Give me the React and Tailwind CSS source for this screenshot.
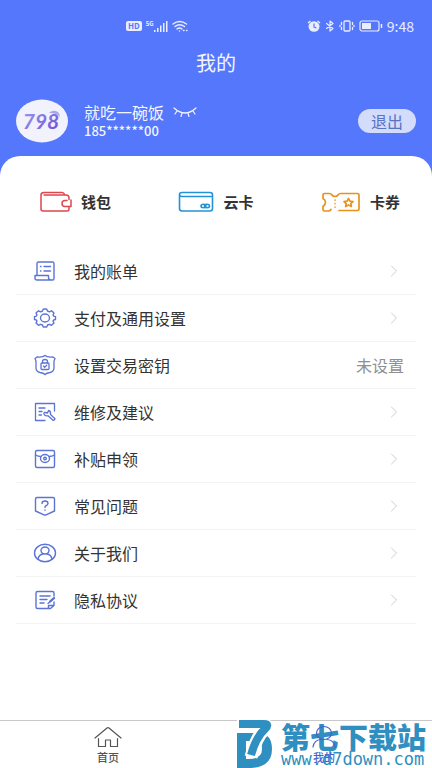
import { useState } from "react";
import { ChevronRight } from "lucide-react";

/*    Icons    */
const stroke = { fill: "none", stroke: "currentColor", strokeLinecap: "round", strokeLinejoin: "round" };

const BillIcon = () => (
    <svg viewBox="0 0 24 24" className="size-6" strokeWidth="1.4" {...stroke}>
        <path d="M4 16V4.5Q4 3 5.5 3H19.5Q21 3 21 4.5V19.5Q21 21 19.5 21H4Q2 21 2 19V16.5H15.5V18.5Q15.5 21 18 21" />
        <path d="M7.5 7.5H8M11 7.5H17.5M7.5 12H8M11 12H17.5" />
    </svg>
);

const GearIcon = () => (
    <svg viewBox="0 0 24 24" className="size-6" strokeWidth="1.4" {...stroke}>
        <path d="M9.5 5Q10 3 10.500 3H13.500Q14 3 14.500 5L16.500 5.800L18.500 4.800L21 7L20 9L20.700 10.200L22.500 10.700V13.500L20.700 14L20 15.200L21 17L18.500 19.300L16.500 18.300L14.500 19Q14 21 13.500 21H10.500Q10 21 9.500 19L7.500 18.300L5.500 19.300L3 17L4 15.200L3.300 14L1.500 13.500V10.700L3.300 10.200L4 9L3 7L5.500 4.800L7.500 5.800Z" />
        <ellipse cx="12" cy="12" rx="4.5" ry="4" />
    </svg>
);

const SecretIcon = () => (
    <svg viewBox="0 0 24 24" className="size-6" strokeWidth="1.3" {...stroke}>
        <path d="M12 2.5Q14 4.5 20 4L22 5.5L21 8V15Q21 18.5 17 19.5Q13.5 20 12 21.5Q10.5 20 7 19.5Q3 18.5 3 15V8L2 5.5L4 4Q10 4.5 12 2.5Z" />
        <rect x="8" y="10" width="8" height="6.5" rx="1" />
        <path d="M9.5 10V8.5Q9.5 6.5 12 6.5T14.5 8.5V10M10.5 13L11.7 14.2L13.7 12.2" />
    </svg>
);

const RepairIcon = () => (
    <svg viewBox="0 0 24 24" className="size-6" strokeWidth="1.3" {...stroke}>
        <path d="M12 20.5H2.5V3.5H21.5V11M6 8H12M6 11.5H9M6 15H8.5" />
        <path d="M15.500 10.500L14.500 13L12 12.500Q10.500 12.500 11 14Q12 16.500 15 15.800L20 20.300Q21.500 20.500 22 18.800L17.500 14.500Q18 11 15.500 10.500Z" />
    </svg>
);

const SubsidyIcon = () => (
    <svg viewBox="0 0 24 24" className="size-6" strokeWidth="1.4" {...stroke}>
        <rect x="2.5" y="3.5" width="19" height="17" rx="1.5" />
        <path d="M2.5 8Q5 9.5 8 9.5M21.5 8Q19 9.5 16 9.5" />
        <ellipse cx="12" cy="11.5" rx="4.5" ry="4" />
        <circle cx="12" cy="11.5" r="1.3" />
    </svg>
);

const QuestionIcon = () => (
    <svg viewBox="0 0 24 24" className="size-6" strokeWidth="1.4" {...stroke}>
        <path d="M4 3.5H20Q21.5 3.5 21.5 5V17L13 20.8Q12 21.3 11 20.8L2.500 17V5Q2.500 3.500 4 3.500Z" />
        <path d="M9 9.5Q9 7 12 7T15 9.5Q15 11 12.5 12Q12 12.5 12 13.5M12 16V16.2" />
    </svg>
);

const AboutIcon = () => (
    <svg viewBox="0 0 24 24" className="size-6" strokeWidth="1.4" {...stroke}>
        <ellipse cx="12" cy="12" rx="10.5" ry="8.7" />
        <ellipse cx="12" cy="9.5" rx="4" ry="3.5" />
        <path d="M5 18Q6 13.5 10 13M14 13Q18 13.5 19 18" />
    </svg>
);

const PrivacyIcon = () => (
    <svg viewBox="0 0 24 24" className="size-6" strokeWidth="1.4" {...stroke}>
        <path d="M21 8V5Q21 3.5 19.5 3.5H4.5Q3 3.5 3 5V19Q3 20.5 4.5 20.5H15.5V17.5H21V14M21 17.5L17.5 20.5H15.5" />
        <path d="M7 8H17M7 11.5H14M7 15H11M21 10.5L15 15.5" />
        <path d="M21 10L17 13.5" strokeWidth="2.2" />
    </svg>
);

const WalletIcon = () => (
    <svg viewBox="0 0 32 22" className="h-[22px] w-8 text-[#e0464f]" strokeWidth="1.5" {...stroke}>
        <path d="M4 4H26Q29 4 29 7V8.5M22 1.500H4Q1 1.500 1 4V18Q1 20 3 20H27Q29 20 29 18V15.500M22 1.500Q24 1.500 24.500 3.500" />
        <path d="M31 9V15.5H25Q22 15.5 22 12.5T25 9.5H27" />
    </svg>
);

const CloudCardIcon = () => (
    <svg viewBox="0 0 36 22" className="h-[22px] w-9 text-[#2492d4]" strokeWidth="1.6" {...stroke}>
        <path d="M33 5.5H4Q1.5 5.5 1.5 3.5T4 1.5H32Q34.5 1.5 34.5 4V17.5Q34.5 20 32 20H4Q1.5 20 1.5 17.5V4" />
        <ellipse cx="25.5" cy="15" rx="2.5" ry="1.7" />
        <ellipse cx="29" cy="15" rx="2.5" ry="1.7" />
    </svg>
);

const CouponIcon = () => (
    <svg viewBox="0 0 40 22" className="h-[22px] w-10 text-[#e8921e]" strokeWidth="1.7" {...stroke}>
        <path d="M18 19.500H36.500Q38 19.500 38 18V4Q38 2.500 36.500 2.500H19.500Q18 2.500 17 4Q16 5.500 14 5.500T11 4Q10 2.500 8.500 2.500H3.500Q2 2.500 2 4V7.500Q4.500 9 4.500 11.200T2 15.500V18.500Q2 20 3.500 20H7.500Q9 20 10 18.500" />
        <path d="M14 9V9.3M14 12.5V12.8M14 16V16.3" strokeWidth="1.5" />
        <path d="M27.5 7.5L28.9 10.2L32 10.6L29.8 12.6L30.4 15.5L27.5 14.1L24.6 15.5L25.2 12.6L23 10.6L26.1 10.2Z" />
    </svg>
);

const HomeIcon = () => (
    <svg viewBox="0 0 28 24" className="h-6 w-7" strokeWidth="1.2" {...stroke}>
        <path d="M1 13L13 3Q14 2.3 15 3L27 13M4.5 13.5V21.5H11.5V15H16.5V21.5H23.5V13.5" />
    </svg>
);

const UserIcon = () => (
    <svg viewBox="0 0 28 24" className="h-6 w-7" strokeWidth="1.2" {...stroke}>
        <ellipse cx="14" cy="8" rx="7.5" ry="6.5" />
        <path d="M3 22Q4 15 11 14.5M17 14.5Q24 15 25 22" />
    </svg>
);

/*    Data    */
const shortcuts = [
    { name: "钱包", Icon: WalletIcon },
    { name: "云卡", Icon: CloudCardIcon },
    { name: "卡券", Icon: CouponIcon },
];

const menu = [
    { name: "我的账单", Icon: BillIcon },
    { name: "支付及通用设置", Icon: GearIcon },
    { name: "设置交易密钥", Icon: SecretIcon, status: "未设置" },
    { name: "维修及建议", Icon: RepairIcon },
    { name: "补贴申领", Icon: SubsidyIcon },
    { name: "常见问题", Icon: QuestionIcon },
    { name: "关于我们", Icon: AboutIcon },
    { name: "隐私协议", Icon: PrivacyIcon },
];

const tabs = [
    { name: "首页", Icon: HomeIcon },
    { name: "我的", Icon: UserIcon },
];

// phone status bar
const StatusBar = () => (
    <div className="flex h-5 items-center justify-between pr-[18px] pl-[126px] text-[#e9edff]">
        <div className="flex items-center gap-1">
            <span className="rounded-xs bg-[#e9edff] px-[2px] text-[8px] leading-[10px] font-bold text-[#5577fc]">HD</span>
            <div className="flex items-start">
                <span className="text-[6px] leading-[8px] font-bold">5G</span>
                <svg viewBox="0 0 14 12" className="h-3 w-[14px]" fill="currentColor">
                    <path d="M0 10h1.5v2H0zM3 8h1.5v4H3zM6 5.500h1.500V12H6zM9 3h1.500v9H9zM12 1h1.500v11H12z" />
                </svg>
            </div>
            <svg viewBox="0 0 16 12" className="h-3 w-4" strokeWidth="1.4" {...stroke}>
                <path d="M1 4Q7.5-1 14.5 4M3 6.5Q7.5 3 12.5 6.5M5 9Q7.5 7 10 9" />
                <path d="M7.5 11V11.1M11.5 10.5H12M14.5 10.5H15" />
            </svg>
        </div>
        <div className="flex items-center gap-1">
            <svg viewBox="0 0 14 12" className="h-3 w-[14px]" fill="currentColor">
                <ellipse cx="7" cy="6.5" rx="5.5" ry="5.2" />
                <path d="M1 3L3.5 1M13 3L10.5 1" stroke="currentColor" strokeWidth="1.4" />
                <path d="M7 3.5V7L9.5 8" fill="none" stroke="#5577fc" strokeWidth="1.2" />
            </svg>
            <svg viewBox="0 0 10 12" className="h-3 w-[10px]" strokeWidth="1.2" {...stroke}>
                <path d="M1.5 3.5L8 8.5L5 11V1L8 3.5L1.5 8.5" />
            </svg>
            <svg viewBox="0 0 16 12" className="h-3 w-4" strokeWidth="1.3" {...stroke}>
                <rect x="5" y="1" width="6" height="10" rx="1" />
                <path d="M2.500 2.500V4.500M2.500 7.500V9.500M1 5.500V6.500M13.500 2.500V4.500M13.500 7.500V9.500M15 5.500V6.500" />
            </svg>
            <svg viewBox="0 0 24 12" className="h-3 w-6">
                <rect x="1" y="1" width="19" height="10" rx="2" fill="none" stroke="currentColor" strokeWidth="1.2" />
                <rect x="3" y="3" width="9" height="6" fill="currentColor" />
                <path d="M22.5 4V8" stroke="currentColor" strokeWidth="1.5" />
            </svg>
            <span className="text-sm leading-5">9:48</span>
        </div>
    </div>
);

const Avatar = () => (
    <svg viewBox="0 0 52 44" className="h-11 w-[52px]">
        <defs>
            <linearGradient id="brand" x1="0" y1="0" x2="1" y2="1">
                <stop offset="0" stopColor="#a09af0" />
                <stop offset="1" stopColor="#6650d8" />
            </linearGradient>
        </defs>
        <ellipse cx="26" cy="22" rx="26" ry="21.5" fill="#f1f2fb" />
        <text x="25" y="30" textAnchor="middle" fontFamily="Lato" fontStyle="italic" fontWeight="700" fontSize="21" fill="url(#brand)">
            798
        </text>
        <path d="M33 14Q37 10 42 13Q44 15 44 18Q41 14 33 14Z" fill="#aaa6ec" />
    </svg>
);

// site mark lying over the tab bar
const SiteMark = () => (
    <div className="pointer-events-none absolute right-[6px] bottom-0 flex items-end gap-2 text-[#2f8fc0]">
        <svg viewBox="0 0 36 48" className="h-12 w-9" fill="none">
            <path d="M0 13H22Q35 14 35 29Q35 47 14 48H0ZM9 21V39H12Q25 39 25 29Q25 21 19 21Z" fill="currentColor" fillRule="evenodd" />
            <path d="M0 5H28Q31 5 28 9Q19 17 14 37" stroke="#ffffff" strokeWidth="13" />
            <path d="M2 4H27Q33 4 28 9Q19 17 14 35" stroke="currentColor" strokeWidth="8" />
        </svg>
        <div>
            <p className="text-[29px] leading-[29px] font-black whitespace-nowrap">第七下载站</p>
            <p className="font-['DejaVu_Sans_Mono',monospace] text-[17px] leading-[17px] whitespace-nowrap">www.d7down.com</p>
        </div>
    </div>
);

const App = () => {
    const [tab, setTab] = useState("我的");
    const [hidden, setHidden] = useState(true); // phone number masked

    return (
        <div className="flex min-h-screen flex-col bg-[#5577fc] font-['Noto_Sans_CJK_SC',sans-serif]">
            <header className="pt-4 text-[#f3f5ff]">
                <StatusBar />
                <h1 className="mt-3 text-center text-xl leading-[30px]">我的</h1>
                <div className="mt-[21px] flex items-center px-4 pb-[13px]">
                    <Avatar />
                    <div className="ml-4 flex-1">
                        <div className="flex items-center gap-2">
                            <p className="text-base leading-5">就吃一碗饭</p>
                            <button type="button" aria-label="显示手机号" onClick={() => setHidden(!hidden)}>
                                <svg viewBox="0 0 26 14" className="h-[14px] w-[26px]" strokeWidth="1.2" {...stroke}>
                                    <path d="M2 3Q13 13 24 3M5 6L3 9M10 8L9 11.5M16 8L17 11.5M21 6L23 9" />
                                </svg>
                            </button>
                        </div>
                        <p className="text-[13px] leading-[18px] font-medium">185******00</p>
                    </div>
                    <button type="button" className="h-6 w-[58px] rounded-full bg-[#d3dcfb] text-base leading-6 text-[#5673c8]">
                        退出
                    </button>
                </div>
            </header>

            <main className="flex-1 rounded-t-[20px] bg-white px-4">
                <div className="flex justify-between py-[35px] pr-4 pl-6">
                    {shortcuts.map(({ name, Icon }) => (
                        <button key={name} type="button" className="flex items-center gap-[9px] text-[15px] leading-[22px] font-bold text-[#333333]">
                            <Icon />
                            {name}
                        </button>
                    ))}
                </div>
                <ul>
                    {menu.map(({ name, Icon, status }) => (
                        <li key={name} className="border-b border-[#f3f3f3]">
                            <a href="#" className="flex h-[46px] items-center gap-[17px] pr-3 pl-[17px] text-base text-[#333333]">
                                <span className="text-[#5b74d6]">
                                    <Icon />
                                </span>
                                <span className="flex-1">{name}</span>
                                {status ? <span className="text-[#8f8f8f]">{status}</span> : <ChevronRight className="size-5 text-[#c4c4c4]" strokeWidth={1} />}
                            </a>
                        </li>
                    ))}
                </ul>
            </main>

            <nav className="relative flex h-12 border-t border-[#c8c8c8] bg-white">
                <SiteMark />
                {tabs.map(({ name, Icon }) => (
                    <button
                        key={name}
                        type="button"
                        onClick={() => setTab(name)}
                        className={
                            tab === name
                                ? "relative flex flex-1 flex-col items-center pt-1 text-[11px] leading-4 font-medium text-[#4d5fd0]"
                                : "relative flex flex-1 flex-col items-center pt-1 text-[11px] leading-4 font-medium text-[#555555]"
                        }
                    >
                        <Icon />
                        {name}
                    </button>
                ))}
            </nav>
        </div>
    );
};
export default App;
